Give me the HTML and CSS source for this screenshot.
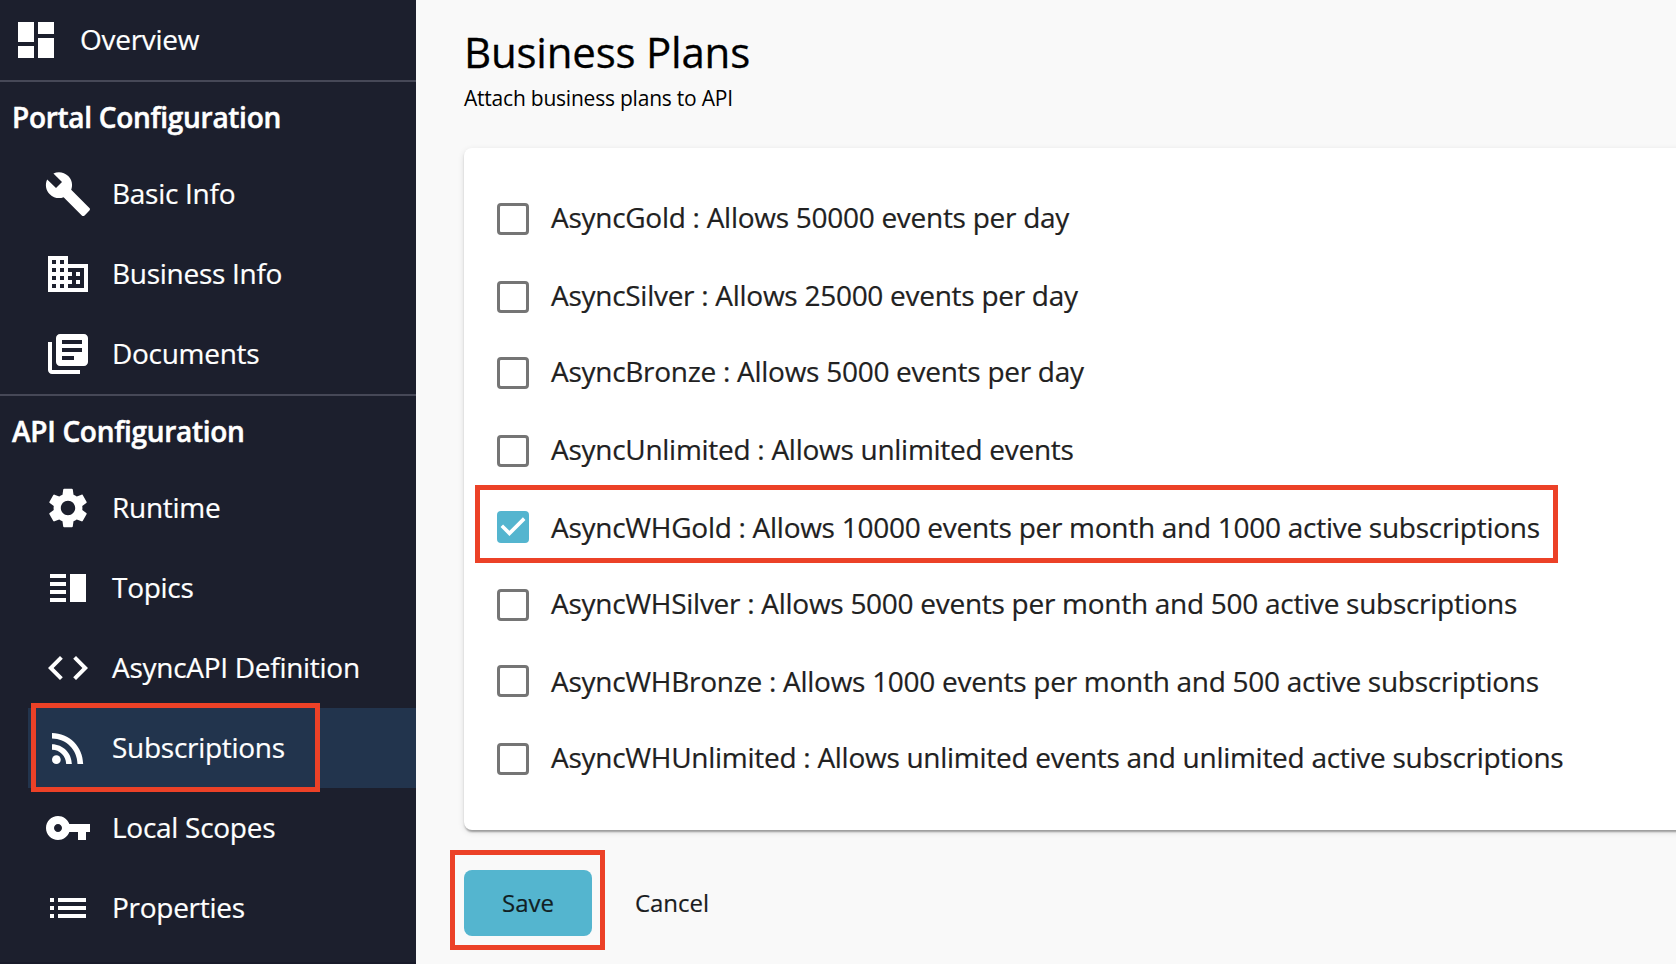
FILE: index.html
```html
<!DOCTYPE html>
<html lang="en">
<head>
<meta charset="utf-8">
<title>Business Plans</title>
<link rel="stylesheet" href="styles.css">
</head>
<body>
<div class="app">
  <nav class="sidebar">
    <a class="nav-item overview"><svg class="icon" viewBox="0 0 24 24"><path d="M3 13h8V3H3v10zm0 8h8v-6H3v6zm10 0h8V11h-8v10zm0-18v6h8V3h-8z"/></svg><span class="nav-label">Overview</span></a>
    <section class="group">
      <h2 class="group-title">Portal Configuration</h2>
      <a class="nav-item"><svg class="icon" viewBox="0 0 24 24"><path d="M22.7 19l-9.1-9.1c.9-2.3.4-5-1.5-6.9-2-2-5-2.4-7.4-1.3L9 6 6 9 1.6 4.7C.4 7.1.9 10.1 2.9 12.1c1.9 1.9 4.6 2.4 6.9 1.5l9.1 9.1c.4.4 1 .4 1.4 0l2.3-2.3c.5-.4.5-1.1.1-1.4z"/></svg><span class="nav-label">Basic Info</span></a>
      <a class="nav-item"><svg class="icon" viewBox="0 0 24 24"><path d="M12 7V3H2v18h20V7H12zM6 19H4v-2h2v2zm0-4H4v-2h2v2zm0-4H4V9h2v2zm0-4H4V5h2v2zm4 12H8v-2h2v2zm0-4H8v-2h2v2zm0-4H8V9h2v2zm0-4H8V5h2v2zm10 12h-8v-2h2v-2h-2v-2h2v-2h-2V9h8v10zm-2-8h-2v2h2v-2zm0 4h-2v2h2v-2z"/></svg><span class="nav-label">Business Info</span></a>
      <a class="nav-item"><svg class="icon" viewBox="0 0 24 24"><path d="M4 6H2v14c0 1.100.9 2 2 2h14v-2H4V6zm16-4H8c-1.100 0-2 .9-2 2v12c0 1.100.9 2 2 2h12c1.100 0 2-.9 2-2V4c0-1.100-.9-2-2-2zm-1 9H9V9h10v2zm-4 4H9v-2h6v2zm4-8H9V5h10v2z"/></svg><span class="nav-label">Documents</span></a>
    </section>
    <section class="group">
      <h2 class="group-title">API Configuration</h2>
      <a class="nav-item"><svg class="icon" viewBox="0 0 24 24"><path d="M19.140 12.940c.04-.3.060-.61.060-.94 0-.32-.02-.64-.07-.94l2.030-1.580c.18-.14.23-.41.12-.61l-1.920-3.320c-.12-.22-.37-.29-.59-.22l-2.390.96c-.5-.38-1.030-.7-1.620-.94l-.36-2.540c-.04-.24-.24-.41-.48-.41h-3.840c-.24 0-.43.17-.47.41l-.36 2.540c-.59.24-1.130.57-1.620.94l-2.390-.96c-.22-.08-.47 0-.59.22L2.740 8.870c-.12.21-.08.47.12.61l2.030 1.580c-.05.3-.09.63-.09.94s.02.64.07.94l-2.030 1.580c-.18.14-.23.41-.12.61l1.920 3.320c.12.22.37.29.59.22l2.390-.96c.5.38 1.030.7 1.620.94l.36 2.540c.05.24.24.41.48.41h3.840c.24 0 .44-.17.47-.41l.36-2.540c.59-.24 1.130-.56 1.620-.94l2.390.96c.22.08.47 0 .59-.22l1.920-3.320c.12-.22.07-.47-.12-.61l-2.010-1.580zM12 15.600c-1.980 0-3.600-1.620-3.600-3.600s1.620-3.600 3.600-3.600 3.600 1.620 3.600 3.600-1.620 3.600-3.600 3.600z"/></svg><span class="nav-label">Runtime</span></a>
      <a class="nav-item"><svg class="icon" viewBox="0 0 24 24"><path d="M3 13h8v2H3zm0 4h8v2H3zm0-8h8v2H3zm0-4h8v2H3zm10 0h8v14h-8z"/></svg><span class="nav-label">Topics</span></a>
      <a class="nav-item"><svg class="icon" viewBox="0 0 24 24"><path d="M9.400 16.600L4.800 12l4.600-4.600L8 6l-6 6 6 6 1.400-1.400zm5.200 0l4.600-4.600-4.600-4.600L16 6l6 6-6 6-1.400-1.400z"/></svg><span class="nav-label">AsyncAPI Definition</span></a>
      <a class="nav-item active"><svg class="icon" viewBox="0 0 24 24"><circle cx="6.180" cy="17.820" r="2.180"/><path d="M4 4.440v2.830c7.030 0 12.730 5.700 12.730 12.730h2.830c0-8.590-6.970-15.560-15.560-15.560zm0 5.660v2.830c3.900 0 7.070 3.170 7.070 7.070h2.830c0-5.470-4.430-9.900-9.900-9.900z"/></svg><span class="nav-label">Subscriptions</span><i class="marker marker-nav"></i></a>
      <a class="nav-item"><svg class="icon" viewBox="0 0 24 24"><path d="M12.650 10C11.830 7.670 9.610 6 7 6c-3.310 0-6 2.690-6 6s2.690 6 6 6c2.610 0 4.830-1.670 5.650-4H17v4h4v-4h2v-4H12.650zM7 14c-1.100 0-2-.9-2-2s.9-2 2-2 2 .9 2 2-.9 2-2 2z"/></svg><span class="nav-label">Local Scopes</span></a>
      <a class="nav-item"><svg class="icon" viewBox="0 0 24 24"><path d="M3 13h2v-2H3v2zm0 4h2v-2H3v2zm0-8h2V7H3v2zm4 4h14v-2H7v2zm0 4h14v-2H7v2zM7 7v2h14V7H7z"/></svg><span class="nav-label">Properties</span></a>
    </section>
  </nav>
  <main class="content">
    <h1 class="title">Business Plans</h1>
    <p class="subtitle">Attach business plans to API</p>
    <div class="card">
      <label class="plan"><span class="box"></span><span class="plan-label">AsyncGold : Allows 50000 events per day</span></label>
      <label class="plan"><span class="box"></span><span class="plan-label">AsyncSilver : Allows 25000 events per day</span></label>
      <label class="plan"><span class="box"></span><span class="plan-label">AsyncBronze : Allows 5000 events per day</span></label>
      <label class="plan"><span class="box"></span><span class="plan-label">AsyncUnlimited : Allows unlimited events</span></label>
      <label class="plan"><span class="box checked"><svg class="tick" viewBox="3 3 18 18"><path d="M10 17l-5-5 1.410-1.410L10 14.170l7.590-7.590L19 8l-9 9z"/></svg></span><span class="plan-label low">AsyncWHGold : Allows 10000 events per month and 1000 active subscriptions</span><i class="marker marker-plan"></i></label>
      <label class="plan"><span class="box"></span><span class="plan-label">AsyncWHSilver : Allows 5000 events per month and 500 active subscriptions</span></label>
      <label class="plan"><span class="box"></span><span class="plan-label low">AsyncWHBronze : Allows 1000 events per month and 500 active subscriptions</span></label>
      <label class="plan"><span class="box"></span><span class="plan-label">AsyncWHUnlimited : Allows unlimited events and unlimited active subscriptions</span></label>
    </div>
    <div class="actions">
      <div class="save-wrap"><button class="btn save">Save</button><i class="marker marker-save"></i></div>
      <button class="btn cancel">Cancel</button>
    </div>
  </main>
</div>
</body>
</html>
```
FILE: styles.css
```css
* { box-sizing: border-box; }
body { margin: 0; font-family: "Open Sans", sans-serif; background: #f9f9f9; }
.app { display: flex; height: 964px; overflow: hidden; }

.sidebar { flex: none; width: 416px; background: #1c1f2d; border-bottom: 2px solid #181a29; color: #fff; }
.nav-item { position: relative; display: flex; align-items: center; gap: 20px; height: 80px; margin-left: 28px; padding-left: 16px; font-size: 28px; line-height: 40px; letter-spacing: -0.28px; white-space: nowrap; -webkit-text-stroke: 0.2px #fff; }
.nav-item.overview { margin-left: 0; padding-left: 12px; }
.nav-item.active { background: #22344d; }
.nav-label { margin-bottom: 2px; }
.icon { flex: none; width: 48px; height: 48px; fill: #fff; }
.group { border-top: 2px solid #464857; }
.group-title { margin: 0; height: 72px; padding: 15px 0 0 12px; font-size: 28px; line-height: 40px; font-weight: 600; letter-spacing: -0.29px; white-space: nowrap; -webkit-text-stroke: 0.5px #fff; }

.content { flex: 1; min-width: 0; padding: 27px 0 0 48px; color: #000; }
.title { margin: 0; font-size: 42px; font-weight: 400; line-height: 50px; letter-spacing: -0.2px; -webkit-text-stroke: 0.3px #000; }
.subtitle { margin: 7px 0 0; font-size: 21px; line-height: 28px; letter-spacing: -0.22px; }
.card { height: 682px; margin: 36px -20px 0 0; padding: 33px 0 0 33px; background: #fff; border-radius: 8px; box-shadow: 0 4px 2px -2px rgba(0,0,0,.2), 0 2px 2px rgba(0,0,0,.14), 0 2px 6px rgba(0,0,0,.12); }
.plan { position: relative; display: flex; align-items: center; gap: 22px; height: 76px; font-size: 28px; line-height: 40px; letter-spacing: -0.275px; color: #212121; white-space: nowrap; -webkit-text-stroke: 0.2px #212121; }
.plan:nth-child(even) { margin-top: 2px; }
.plan:nth-child(even) .box { margin-bottom: 1px; }
.plan-label { margin-bottom: 4px; }
.plan-label.low { margin-bottom: 0; }
.box { flex: none; width: 32px; height: 32px; border: 3.5px solid #757575; border-radius: 4px; }
.box.checked { border: 0; background: #54b5cf; }
.tick { display: block; width: 32px; height: 32px; fill: #fff; }

.actions { display: flex; padding-top: 40px; }
.save-wrap { position: relative; }
.btn { height: 66px; padding: 0; border: 0; border-radius: 8px; background: none; font: 400 24px/42px "Open Sans", sans-serif; color: #1a1c1e; -webkit-text-stroke: 0.2px #1a1c1e; }
.save { width: 128px; background: #54b5cf; color: #101f24; }
.cancel { width: 160px; }

/* highlight frames drawn over the content */
.marker { position: absolute; border: 5px solid #ec4127; }
.marker-nav { left: 3px; top: -5px; width: 289px; height: 89px; }
.marker-plan { left: -22px; top: -4px; width: 1083px; height: 78px; }
.marker-save { left: -14px; top: -20px; width: 155px; height: 100px; }
```
